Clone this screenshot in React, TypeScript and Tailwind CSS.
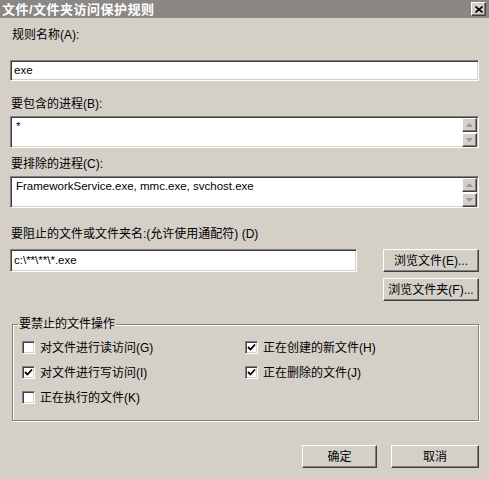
import { ReactNode } from 'react'

const sunken =
  'border border-t-[#808080] border-l-[#808080] border-b-white border-r-white shadow-[inset_1px_1px_0_#404040,inset_-1px_-1px_0_#d4d0c8] bg-white'
const raised =
  'border border-t-white border-l-white border-b-[#404040] border-r-[#404040] shadow-[inset_-1px_-1px_0_#808080] bg-[#d4d0c8]'

function ScrollBtn({ up }: { up?: boolean }) {
  return (
    <div className={`${raised} w-[15px] h-[14px] flex items-center justify-center`}>
      <svg width="7" height="4" viewBox="0 0 7 4">
        {up ? (
          <polygon points="3.5,0 7,4 0,4" fill="#9a9894" />
        ) : (
          <polygon points="0,0 7,0 3.5,4" fill="#9a9894" />
        )}
      </svg>
    </div>
  )
}

function MultiBox({ text }: { text: string }) {
  return (
    <div className={`${sunken} h-[32px] flex justify-between pl-[5px] pr-[1px] pt-[1px]`}>
      <span className="text-[11.5px] leading-[14px] pt-[1px]">{text}</span>
      <div className="flex flex-col gap-[1px]">
        <ScrollBtn up />
        <ScrollBtn />
      </div>
    </div>
  )
}

function Check({ on, children }: { on?: boolean; children: ReactNode }) {
  return (
    <div className="flex items-center gap-[5px] h-[25px]">
      <div className={`${sunken} w-[13px] h-[13px] flex items-center justify-center`}>
        {on && (
          <svg width="9" height="9" viewBox="0 0 9 9">
            <path d="M1 4 L3.5 6.5 L8 1.5" stroke="#000" strokeWidth="1.8" fill="none" />
          </svg>
        )}
      </div>
      <span className="text-[12px]">{children}</span>
    </div>
  )
}

function Btn({ children, w }: { children: ReactNode; w: string }) {
  return (
    <button type="button" className={`${raised} ${w} h-[23px] text-[12px] text-black`}>
      {children}
    </button>
  )
}

export default function App() {
  return (
    <div className="w-[489px] h-[479px] bg-[#d4d0c8] text-black font-['Liberation_Sans','Noto_Sans_CJK_SC',sans-serif] overflow-hidden">
      <div className="h-[18px] bg-[#8a8785] flex items-center justify-between pl-[2px] pr-[3px]">
        <span className="text-white font-bold text-[13px] tracking-[0.5px] leading-none">
          文件/文件夹访问保护规则
        </span>
        <div className={`${raised} w-[15px] h-[14px] flex items-center justify-center`}>
          <svg width="8" height="7" viewBox="0 0 8 7">
            <path d="M0.5 0.5 L7.5 6.5 M7.5 0.5 L0.5 6.5" stroke="#000" strokeWidth="1.6" />
          </svg>
        </div>
      </div>

      <div className="px-[10px]">
        <div className="mt-[10px] h-[14px] text-[12px] leading-[14px] pl-[2px]">规则名称(A):</div>
        <div className={`${sunken} mt-[18px] h-[21px] flex items-center pl-[3px] text-[11.5px]`}>exe</div>

        <div className="mt-[16px] h-[14px] text-[12px] leading-[14px] pl-[1px]">要包含的进程(B):</div>
        <div className="mt-[5px]">
          <MultiBox text="*" />
        </div>

        <div className="mt-[9px] h-[14px] text-[12px] leading-[14px] pl-[1px]">要排除的进程(C):</div>
        <div className="mt-[5px]">
          <MultiBox text="FrameworkService.exe, mmc.exe, svchost.exe" />
        </div>

        <div className="mt-[19px] h-[14px] text-[12px] leading-[14px] pl-[1px]">
          要阻止的文件或文件夹名:(允许使用通配符) (D)
        </div>
        <div className="mt-[8px] flex justify-between">
          <div className={`${sunken} w-[347px] h-[23px] flex items-center pl-[3px] text-[11.5px]`}>
            c:\**\**\*.exe
          </div>
          <div className="flex flex-col gap-[6px]">
            <Btn w="w-[96px]">浏览文件(E)...</Btn>
            <Btn w="w-[96px]">浏览文件夹(F)...</Btn>
          </div>
        </div>

        <fieldset className="mt-[16px] ml-[2px] border border-[#808080] shadow-[1px_1px_0_white,inset_1px_1px_0_white] h-[104px] pl-[9px] pr-[10px]">
          <legend className="text-[12px] ml-[-4px] px-[1px] leading-[14px]">要禁止的文件操作</legend>
          <div className="grid grid-cols-[223px_1fr] mt-[4px]">
            <Check>对文件进行读访问(G)</Check>
            <Check on>正在创建的新文件(H)</Check>
            <Check on>对文件进行写访问(I)</Check>
            <Check on>正在删除的文件(J)</Check>
            <Check>正在执行的文件(K)</Check>
          </div>
        </fieldset>

        <div className="mt-[24px] flex justify-end gap-[14px]">
          <Btn w="w-[75px]">确定</Btn>
          <Btn w="w-[88px]">取消</Btn>
        </div>
      </div>
    </div>
  )
}
